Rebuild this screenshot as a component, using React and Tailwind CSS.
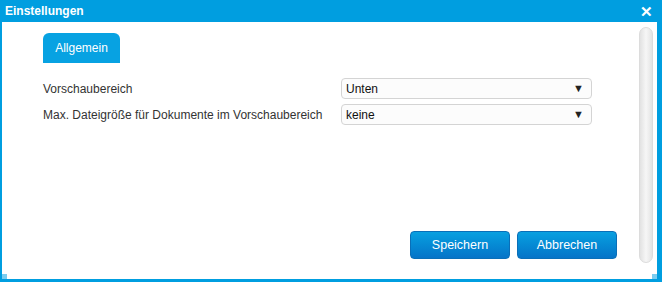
function Auswahl({ wert }) {
  return (
    <div className="relative flex h-[21px] w-[251px] items-center rounded-[4px] border border-[#d4d4d4] bg-[#fcfcfc] pl-[4px] text-[12px] text-[#111]">
      {wert}
      <span className="absolute right-[7px] top-[3px] text-[11px] leading-[12px] text-[#222]">▼</span>
    </div>
  );
}

function Knopf({ children }) {
  return (
    <button className="h-[28px] w-[100px] rounded-[4px] border border-[#0a6fb8] bg-gradient-to-b from-[#0aa0e0] to-[#0674c8] text-[12.5px] text-white">
      {children}
    </button>
  );
}

export default function App() {
  return (
    <div
      className="flex h-[282px] w-[662px] flex-col bg-[#009ee0]"
      style={{ fontFamily: '"Liberation Sans", Arial, sans-serif' }}
    >
      {/* Titelleiste */}
      <div className="flex h-[22px] items-center justify-between pl-[5px] pr-[9px]">
        <span className="text-[12px] font-bold text-white">Einstellungen</span>
        <span className="text-[15px] font-bold leading-none text-white">✕</span>
      </div>

      {/* Inhalt */}
      <div className="relative ml-[2px] mr-[5px] mb-[3px] flex flex-1 bg-white">
        <div className="flex flex-1 flex-col pl-[41px] pr-[22px] pt-[11px]">
          <div className="flex">
            <div className="flex h-[30px] w-[77px] items-center justify-center rounded-t-[6px] bg-[#07a2e2] text-[12px] text-white">
              Allgemein
            </div>
          </div>

          <div className="mt-[15px] flex flex-col gap-[5px]">
            <div className="flex items-center">
              <span className="w-[298px] text-[12px] text-[#333]">Vorschaubereich</span>
              <Auswahl wert="Unten" />
            </div>
            <div className="flex items-center">
              <span className="w-[298px] text-[12px] text-[#333]">
                Max. Dateigröße für Dokumente im Vorschaubereich
              </span>
              <Auswahl wert="keine" />
            </div>
          </div>

          <div className="mt-auto mb-[20px] flex justify-end gap-[7px]">
            <Knopf>Speichern</Knopf>
            <Knopf>Abbrechen</Knopf>
          </div>
        </div>

        {/* Scrollbalken */}
        <div className="mr-[4px] mt-[5px] mb-[16px] w-[14px] rounded-full border border-[#dcdcdc] bg-gradient-to-r from-[#e2e2e2] via-[#f6f6f6] to-[#e4e4e4]" />

        <div className="absolute bottom-0 left-0 h-[5px] w-[5px] bg-[#7ccdf0]" />
        <div className="absolute bottom-0 right-0 h-[5px] w-[5px] bg-[#7ccdf0]" />
      </div>
    </div>
  );
}
